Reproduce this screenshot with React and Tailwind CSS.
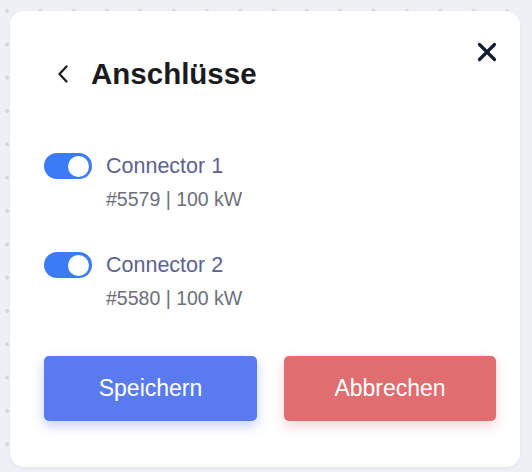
const connectors = [
  { name: "Connector 1", id: "#5579", power: "100 kW" },
  { name: "Connector 2", id: "#5580", power: "100 kW" },
];

const Toggle = () => (
  <div className="flex h-[26px] w-[48px] shrink-0 items-center justify-end rounded-full bg-[#3b7bf5] pr-[3px]">
    <div className="h-[21px] w-[21px] rounded-full bg-white" />
  </div>
);

const App = () => {
  return (
    <div
      className="h-[472px] w-[532px] overflow-hidden bg-[#eef0f5] bg-[radial-gradient(circle,#d4d6dd_1.6px,transparent_1.8px)] bg-[length:33.33px_33.33px] bg-[position:-9.67px_-5.67px] pl-[10px] pt-[11px]"
      style={{ fontFamily: '"Liberation Sans", Arial, sans-serif' }}
    >
      <div className="relative h-[456px] w-[510px] rounded-[14px] bg-white pl-[34px] pr-[24px] pt-[45px] shadow-[0_1px_3px_rgba(20,25,60,0.06)]">
        {/* close */}
        <button className="absolute right-[23px] top-[31px] text-[#161b2d]">
          <svg width="20" height="20" viewBox="0 0 20 20" fill="none">
            <path d="M2.5 2.5L17.5 17.5M17.5 2.5L2.5 17.5" stroke="currentColor" strokeWidth="3.2" strokeLinecap="round" />
          </svg>
        </button>

        {/* header */}
        <div className="flex h-[36px] items-center pl-[13px]">
          <svg width="12" height="18" viewBox="0 0 12 18" fill="none" className="text-[#1b1b1f]">
            <path d="M9.5 1.5L2.5 9L9.5 16.5" stroke="currentColor" strokeWidth="2.2" strokeLinecap="round" strokeLinejoin="round" />
          </svg>
          <h1 className="ml-[22px] text-[29.5px] font-bold leading-[36px] text-[#1b1b1f]">Anschlüsse</h1>
        </div>

        {/* connectors */}
        <div className="mt-[61px] flex flex-col gap-[41px]">
          {connectors.map((c) => (
            <div key={c.id} className="flex items-start">
              <Toggle />
              <div className="ml-[14px] flex flex-col">
                <span className="text-[21.5px] leading-[26px] text-[#5c6290]">{c.name}</span>
                <span className="mt-[8px] text-[19.5px] leading-[24px] text-[#6c6f7c]">
                  {c.id} | {c.power}
                </span>
              </div>
            </div>
          ))}
        </div>

        {/* actions */}
        <div className="mt-[46px] flex gap-[27px]">
          <button className="h-[65px] w-[213px] shrink-0 rounded-[5px] bg-[#5a7bef] text-[23px] text-white shadow-[0_5px_12px_rgba(90,123,239,0.35)]">
            Speichern
          </button>
          <button className="h-[65px] w-[212px] shrink-0 rounded-[5px] bg-[#e06d6f] text-[23px] text-white shadow-[0_5px_12px_rgba(224,109,111,0.3)]">
            Abbrechen
          </button>
        </div>
      </div>
    </div>
  );
};

export default App;
